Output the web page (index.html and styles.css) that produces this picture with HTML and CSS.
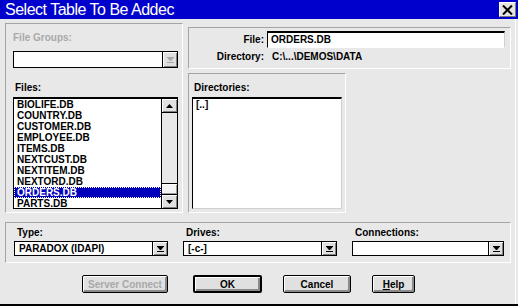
FILE: index.html
```html
<!DOCTYPE html>
<html lang="en">
<head>
    <meta charset="UTF-8">
    <meta name="viewport" content="width=device-width, initial-scale=1.0">
    <title>Select Table To Be Added</title>
    <link rel="stylesheet" href="styles.css">
</head>
<body>
    <div class="window">
        <div class="titlebar">
            <span class="title">Select Table To Be Addec</span>
            <span class="close-btn">
                <svg width="11" height="10" viewBox="0 0 11 10"><path d="M1 0.5 L10 9.5 M10 0.5 L1 9.5" stroke="#000" stroke-width="2"/></svg>
            </span>
        </div>

        <div class="dialog">
            <div class="upper">
                <!-- left: groups and files -->
                <div class="panel files-panel">
                    <span class="label disabled">File Groups:</span>
                    <div class="combo groups-combo">
                        <span class="combo-text"></span>
                        <span class="drop disabled">
                            <svg width="7" height="6" viewBox="0 0 7 6"><path d="M0 0 H7 L3.5 4 Z M0 5.5 H7" fill="#a8a8a8" stroke="#a8a8a8" stroke-width="1"/></svg>
                        </span>
                    </div>
                    <span class="label files-label">Files:</span>
                    <div class="listbox">
                        <div class="items">
                            <div class="item">BIOLIFE.DB</div>
                            <div class="item">COUNTRY.DB</div>
                            <div class="item">CUSTOMER.DB</div>
                            <div class="item">EMPLOYEE.DB</div>
                            <div class="item">ITEMS.DB</div>
                            <div class="item">NEXTCUST.DB</div>
                            <div class="item">NEXTITEM.DB</div>
                            <div class="item">NEXTORD.DB</div>
                            <div class="item selected">ORDERS.DB</div>
                            <div class="item">PARTS.DB</div>
                        </div>
                        <div class="scrollbar">
                            <span class="sb-btn sb-up">
                                <svg width="7" height="4" viewBox="0 0 7 4"><path d="M3.5 0 L7 4 H0 Z" fill="#000"/></svg>
                            </span>
                            <span class="sb-track"><span class="sb-thumb"></span></span>
                            <span class="sb-btn sb-down">
                                <svg width="7" height="4" viewBox="0 0 7 4"><path d="M0 0 H7 L3.5 4 Z" fill="#000"/></svg>
                            </span>
                        </div>
                    </div>
                </div>

                <!-- right: file name, directory, directories -->
                <div class="right-col">
                    <div class="panel file-panel">
                        <div class="field-row">
                            <span class="key">File:</span>
                            <div class="textbox">ORDERS.DB</div>
                        </div>
                        <div class="field-row dir-row">
                            <span class="key">Directory:</span>
                            <span class="dir-value">C:\...\DEMOS\DATA</span>
                        </div>
                    </div>
                    <div class="panel dir-panel">
                        <span class="label dirs-label">Directories:</span>
                        <div class="listbox dirs">
                            <div class="items">
                                <div class="item">[..]</div>
                            </div>
                        </div>
                    </div>
                </div>
            </div>

            <div class="panel bottom-panel">
                <div class="field">
                    <span class="label">Type:</span>
                    <div class="combo">
                        <span class="combo-text">PARADOX (IDAPI)</span>
                        <span class="drop">
                            <svg width="7" height="6" viewBox="0 0 7 6"><path d="M0 0 H7 L3.5 4 Z M0 5.5 H7" fill="#000" stroke="#000" stroke-width="1"/></svg>
                        </span>
                    </div>
                </div>
                <div class="field">
                    <span class="label">Drives:</span>
                    <div class="combo">
                        <span class="combo-text">[-c-]</span>
                        <span class="drop">
                            <svg width="7" height="6" viewBox="0 0 7 6"><path d="M0 0 H7 L3.5 4 Z M0 5.5 H7" fill="#000" stroke="#000" stroke-width="1"/></svg>
                        </span>
                    </div>
                </div>
                <div class="field wide">
                    <span class="label">Connections:</span>
                    <div class="combo">
                        <span class="combo-text"></span>
                        <span class="drop">
                            <svg width="7" height="6" viewBox="0 0 7 6"><path d="M0 0 H7 L3.5 4 Z M0 5.5 H7" fill="#000" stroke="#000" stroke-width="1"/></svg>
                        </span>
                    </div>
                </div>
            </div>

            <div class="buttons">
                <button class="btn btn-server" disabled>Server Connect</button>
                <button class="btn btn-ok">OK</button>
                <button class="btn btn-cancel">Cancel</button>
                <button class="btn btn-help"><u>H</u>elp</button>
            </div>
        </div>
    </div>
</body>
</html>
```

FILE: styles.css
```css
* {
    box-sizing: border-box;
}
body {
    margin: 0;
    background-color: #e8e8e8; /* dialog grey */
    font-family: "Liberation Sans", Arial, sans-serif;
    font-size: 10px;
    font-weight: bold;
    color: #000;
}
.window {
    width: 518px;
    height: 306px;
    display: flex;
    flex-direction: column;
    border-bottom: 2px solid #000;
}
.titlebar {
    height: 19px;
    flex: none;
    background-color: #0000cc;
    display: flex;
    align-items: center;
    justify-content: space-between;
    padding: 0 2px 0 5px;
}
.title {
    color: #fff;
    font-size: 16px;
    font-weight: normal;
    letter-spacing: -0.5px;
}
.close-btn {
    width: 17px;
    height: 15px;
    background-color: #e4e4e4;
    border: 1px solid #7a7a7a;
    border-top-color: #fff;
    border-left-color: #fff;
    display: flex;
    align-items: center;
    justify-content: center;
}
.dialog {
    flex: 1;
    padding: 4px 0 0 5px;
    margin-right: 2px;
    border-right: 1px solid #fff;
    display: flex;
    flex-direction: column;
}

/* etched group frames */
.panel {
    border: 1px solid #fff;
    border-top-color: #a4a4a4;
    border-left-color: #a4a4a4;
}
.upper {
    display: flex;
    gap: 5px;
}
.label {
    display: block;
    height: 12px;
    line-height: 12px;
    white-space: nowrap;
}
.label.disabled {
    color: #a8a8a8;
}

.files-panel {
    width: 178px;
    height: 190px;
    padding: 8px 4px 3px 7px;
    display: flex;
    flex-direction: column;
}
.groups-combo {
    margin-top: 7px;
}
.files-label {
    margin-top: 14px;
    padding-left: 2px;
}
.files-panel .listbox {
    margin-top: 3px;
}

.right-col {
    margin-top: 4px;
    display: flex;
    flex-direction: column;
    gap: 4px;
}
.file-panel {
    width: 323px;
    height: 42px;
    padding: 3px 5px 0 0;
}
.field-row {
    display: flex;
    align-items: center;
}
.key {
    width: 76px;
    flex: none;
    text-align: right;
    padding-right: 1px;
}
.textbox {
    flex: 1;
    height: 17px;
    margin-left: 2px;
    background-color: #fff;
    border: 1px solid #000;
    border-top-width: 2px;
    border-right-color: #d0d0d0;
    border-bottom-color: #fff;
    padding-left: 3px;
    line-height: 14px;
}
.dir-row {
    margin-top: 3px;
    height: 12px;
    line-height: 12px;
}
.dir-value {
    margin-left: 7px;
}
.dir-panel {
    width: 158px;
    height: 140px;
    padding: 8px 3px 3px 3px;
    display: flex;
    flex-direction: column;
}
.dirs-label {
    padding-left: 2px;
}
.dir-panel .listbox {
    margin-top: 3px;
    border-right-color: #d0d0d0;
    border-bottom-color: #d0d0d0;
}

/* combo boxes */
.combo {
    display: flex;
    height: 17px;
    background-color: #fff;
    border: 1px solid #000;
}
.combo-text {
    flex: 1;
    padding-left: 4px;
    white-space: nowrap;
    display: flex;
    align-items: center;
}
.drop {
    width: 15px;
    background-color: #e0e0e0;
    border-left: 1px solid #000;
    box-shadow: inset 1px 1px #fff, inset -1px -1px #808080;
    display: flex;
    align-items: center;
    justify-content: center;
}

/* list boxes */
.listbox {
    height: 112px;
    display: flex;
    background-color: #fff;
    border: 1px solid #000;
    border-top-width: 2px;
}
.items {
    flex: 1;
}
.item {
    height: 11px;
    line-height: 11px;
    padding-left: 3px;
    white-space: nowrap;
}
.item.selected {
    background-color: #0000bb;
    color: #fff;
    outline: 1px dotted #fff;
    outline-offset: -1px;
}
.scrollbar {
    width: 16px;
    border-left: 1px solid #000;
    display: flex;
    flex-direction: column;
    background-color: #e8e8e8;
}
.sb-btn {
    height: 14px;
    background-color: #e0e0e0;
    box-shadow: inset 1px 1px #fff, inset -1px -1px #808080;
    display: flex;
    align-items: center;
    justify-content: center;
}
.sb-up {
    border-bottom: 1px solid #000;
}
.sb-down {
    border-top: 1px solid #000;
}
.sb-track {
    flex: 1;
    display: flex;
    flex-direction: column;
    justify-content: flex-end;
}
.sb-thumb {
    height: 11px;
    background-color: #f4f4f4;
    border-top: 1px solid #000;
    box-shadow: inset 0 1px #fff, inset -1px -1px #9a9a9a;
}

/* bottom group */
.bottom-panel {
    margin-top: 9px;
    width: 506px;
    height: 41px;
    padding: 4px 6px 0 8px;
    display: flex;
    gap: 15px;
}
.field {
    width: 154px;
    display: flex;
    flex-direction: column;
}
.field.wide {
    flex: 1;
}
.field .label {
    padding-left: 3px;
}
.field .combo {
    margin-top: 2px;
    height: 15px;
}

/* push buttons */
.buttons {
    display: flex;
    margin-top: 12px;
    padding-left: 77px;
    gap: 21px;
}
.btn {
    height: 18px;
    padding: 0;
    border: 1px solid #000;
    border-radius: 2px;
    background-color: #e0e0e0;
    box-shadow: inset 1px 1px #fff, inset -2px -2px #8a8a8a;
    font-family: "Liberation Sans", Arial, sans-serif;
    font-size: 10px;
    font-weight: bold;
    color: #000;
}
.btn-server {
    width: 86px;
    color: #a8a8a8;
}
.btn-ok {
    width: 69px;
    margin-left: 4px;
    border-width: 2px;
}
.btn-cancel {
    width: 68px;
}
.btn-help {
    width: 43px;
}
```
